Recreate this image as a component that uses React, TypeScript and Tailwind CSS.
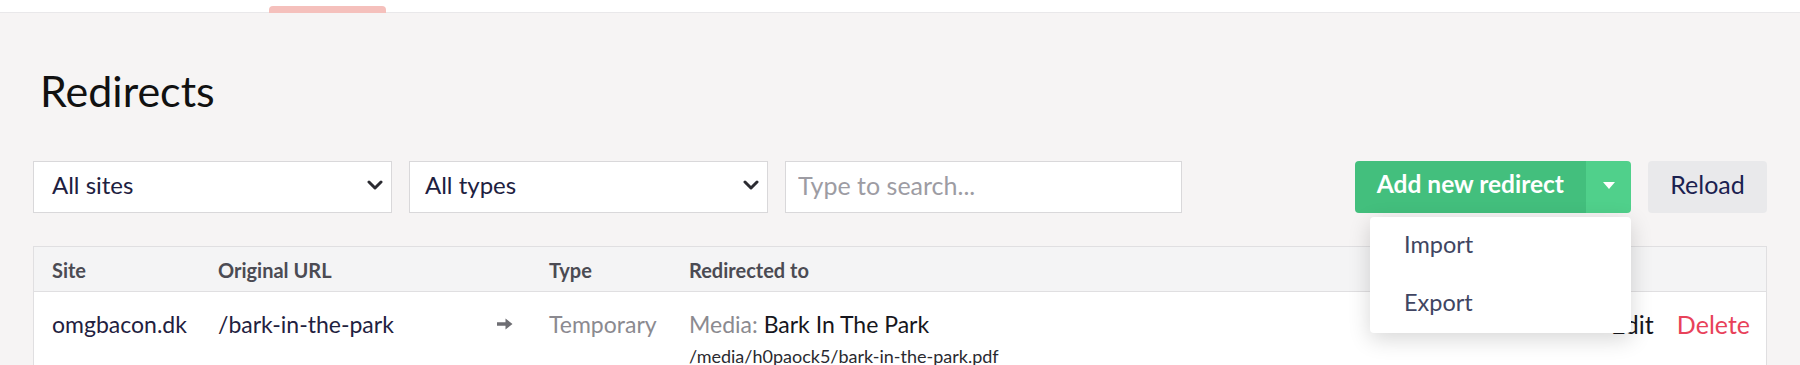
import React from "react"

function Chevron() {
  return (
    <svg width="16" height="10" viewBox="0 0 16 10" fill="none">
      <path d="M2 2l6 6 6-6" stroke="#2b2b31" strokeWidth="3" strokeLinecap="round" strokeLinejoin="round" />
    </svg>
  )
}

function Caret() {
  return (
    <svg width="12" height="7" viewBox="0 0 12 7">
      <path d="M0 0h12L6 7z" fill="#ffffff" />
    </svg>
  )
}

function ArrowRight() {
  return (
    <svg width="16" height="12" viewBox="0 0 16 12">
      <path d="M0 4.3h8.5V0.6L15.5 6l-7 5.4V7.7H0z" fill="#6e6e73" />
    </svg>
  )
}

export default function App() {
  return (
    <div className="h-[365px] overflow-hidden bg-[#f6f4f4] font-['Lato',sans-serif] text-[23px]">
      {/* top bar */}
      <div className="relative h-[13px] bg-white border-b border-[#e9e8ea]">
        <div className="absolute left-[269px] bottom-[-1px] w-[117px] h-[7px] rounded-t-[4px] bg-[#f5c0bc]" />
      </div>

      <div className="px-[33px]">
        <h1 className="pt-[54px] pl-[7px] text-[43px] leading-[48px] font-normal text-[#111]">Redirects</h1>

        {/* filters + actions */}
        <div className="mt-[46px] flex items-center h-[52px]">
          <div className="w-[359px] h-full flex items-center justify-between bg-white border border-[#d9d8da] pl-[18px] pr-[8px] pb-[4px] text-[24px] text-[#1d2040]">
            <span>All sites</span>
            <Chevron />
          </div>
          <div className="ml-[17px] w-[359px] h-full flex items-center justify-between bg-white border border-[#d9d8da] pl-[15px] pr-[8px] pb-[4px] text-[24px] text-[#1d2040]">
            <span>All types</span>
            <Chevron />
          </div>
          <input
            className="ml-[17px] w-[397px] h-full bg-white border border-[#d9d8da] pl-[12px] pb-[4px] text-[25px] outline-none placeholder:text-[#9d9ca3]"
            placeholder="Type to search..."
          />
          <div className="flex-1" />
          <div className="relative h-full flex">
            <div className="h-full flex items-center px-[22px] pb-[5px] rounded-l-[4px] bg-[#43bf7d] text-[24.5px] font-bold text-white">
              Add new redirect
            </div>
            <div className="h-full w-[45px] flex items-center justify-center pb-[4px] rounded-r-[4px] bg-[#50d08b]">
              <Caret />
            </div>
            <div className="absolute right-0 top-[56px] w-[261px] z-10 rounded-[4px] bg-white shadow-[0_6px_22px_rgba(0,0,0,0.16)] text-[23.5px] text-[#404562]">
              <div className="h-[58px] flex items-center pl-[34px] pb-[2px]">Import</div>
              <div className="h-[58px] flex items-center pl-[34px] pb-[2px]">Export</div>
            </div>
          </div>
          <div className="ml-[17px] h-full w-[119px] flex items-center justify-center pb-[5px] rounded-[4px] bg-[#e9e9eb] text-[25px] text-[#1b2150]">
            Reload
          </div>
        </div>

        {/* table */}
        <div className="mt-[33px] border border-[#e0dfe1] bg-white">
          <div className="flex h-[45px] pt-[12px] bg-[#f4f4f5] border-b border-[#e0dfe1] text-[20px] leading-[23px] font-bold text-[#4b4b53]">
            <div className="w-[166px] pl-[18px]">Site</div>
            <div className="w-[279px] pl-[18px]">Original URL</div>
            <div className="w-[52px]" />
            <div className="w-[140px] pl-[18px]">Type</div>
            <div className="flex-1 pl-[18px]">Redirected to</div>
          </div>
          <div className="flex pt-[18px] leading-[28px] text-[#1f2140]">
            <div className="w-[166px] pl-[18px]">omgbacon.dk</div>
            <div className="w-[279px] pl-[18px]">/bark-in-the-park</div>
            <div className="w-[52px] pl-[18px] pt-[8px] h-[28px]">
              <ArrowRight />
            </div>
            <div className="w-[140px] pl-[18px] text-[#8b8a90]">Temporary</div>
            <div className="flex-1 pl-[18px]">
              <div>
                <span className="text-[#8b8a90]">Media:</span> <span className="text-[#16161c]">Bark In The Park</span>
              </div>
              <div className="mt-[7px] text-[18px] leading-[22px] text-[#2a2a30]">/media/h0paock5/bark-in-the-park.pdf</div>
            </div>
            <div className="flex gap-[23px] pr-[16px] text-[25px]">
              <span className="text-[#16161c]">Edit</span>
              <span className="text-[#e8425a]">Delete</span>
            </div>
          </div>
        </div>
      </div>
    </div>
  )
}
